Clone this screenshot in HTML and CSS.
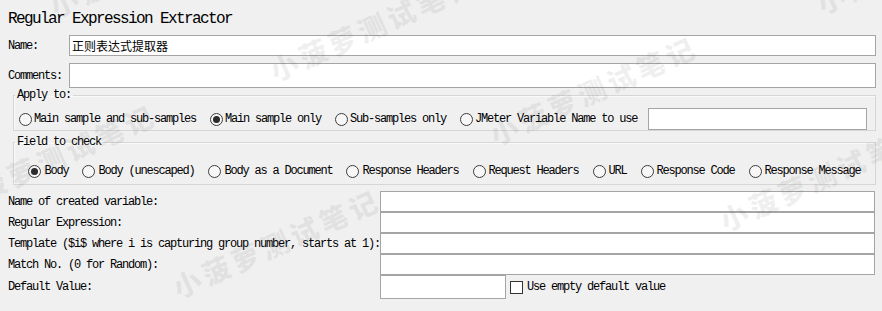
FILE: index.html
```html
<!DOCTYPE html>
<html lang="en">
<head>
  <meta charset="UTF-8">
  <title>Regular Expression Extractor</title>
  <link rel="stylesheet" href="styles.css">
</head>
<body>
  <div class="page">
    <h1 class="title">Regular Expression Extractor</h1>

    <div class="field-row name-row">
      <label class="field-label">Name:</label>
      <input class="text-input" type="text" value="正则表达式提取器">
    </div>
    <div class="field-row comments-row">
      <label class="field-label">Comments:</label>
      <input class="text-input" type="text">
    </div>

    <fieldset class="group apply-group">
      <legend>Apply to:</legend>
      <div class="radio-row">
        <span class="radio-item"><span class="radio"></span>Main sample and sub-samples</span>
        <span class="radio-item"><span class="radio checked"></span>Main sample only</span>
        <span class="radio-item"><span class="radio"></span>Sub-samples only</span>
        <span class="radio-item"><span class="radio"></span>JMeter Variable Name to use</span>
        <input class="text-input var-input" type="text">
      </div>
    </fieldset>

    <fieldset class="group field-group">
      <legend>Field to check</legend>
      <div class="radio-row centered">
        <span class="radio-item"><span class="radio checked"></span>Body</span>
        <span class="radio-item"><span class="radio"></span>Body (unescaped)</span>
        <span class="radio-item"><span class="radio"></span>Body as a Document</span>
        <span class="radio-item"><span class="radio"></span>Response Headers</span>
        <span class="radio-item"><span class="radio"></span>Request Headers</span>
        <span class="radio-item"><span class="radio"></span>URL</span>
        <span class="radio-item"><span class="radio"></span>Response Code</span>
        <span class="radio-item"><span class="radio"></span>Response Message</span>
      </div>
    </fieldset>

    <div class="regex-grid">
      <label class="grid-label">Name of created variable:</label>
      <input class="text-input" type="text">
      <label class="grid-label">Regular Expression:</label>
      <input class="text-input" type="text">
      <label class="grid-label">Template ($i$ where i is capturing group number, starts at 1):</label>
      <input class="text-input" type="text">
      <label class="grid-label">Match No. (0 for Random):</label>
      <input class="text-input" type="text">
      <label class="grid-label">Default Value:</label>
      <div class="default-row">
        <input class="text-input default-input" type="text">
        <span class="check-item"><span class="checkbox"></span>Use empty default value</span>
      </div>
    </div>
  </div>

  <!-- watermark overlay -->
  <div class="watermarks">
    <span class="wm wm-a">小菠萝测试笔记</span>
    <span class="wm wm-b">小菠萝测试笔记</span>
    <span class="wm wm-c">小菠萝测试笔记</span>
    <span class="wm wm-d">小菠萝测试笔记</span>
    <span class="wm wm-e">小菠萝测试笔记</span>
    <span class="wm wm-f">小菠萝测试笔记</span>
    <span class="wm wm-g">小菠萝测试笔记</span>
  </div>
</body>
</html>
```

FILE: styles.css
```css
html, body {
  margin: 0;
  height: 100%;
  overflow: hidden;
}
body {
  background-color: #f0f0f0;
  color: #000;
  font-family: "Liberation Mono", "Noto Sans CJK SC", monospace;
  font-size: 12px;
  letter-spacing: -1.2px;
  position: relative;
}
.page {
  padding: 0 6px 0 8px;
}
.title {
  margin: 9px 0 6px 0;
  font-size: 16px;
  font-weight: normal;
  letter-spacing: -1.6px;
  line-height: 20px;
}
.field-row {
  display: flex;
  align-items: center;
  margin-bottom: 7px;
}
.field-label {
  width: 61px;
  flex: none;
}
.text-input {
  box-sizing: border-box;
  border: 1px solid #a5a5a5;
  background-color: #fff;
  margin: 0;
  padding: 0 2px;
  font-family: "Noto Sans CJK SC", sans-serif;
  font-size: 12px;
  letter-spacing: 0;
  color: #000;
  outline: none;
}
.field-row .text-input {
  flex: 1;
}
.name-row .text-input {
  height: 21px;
}
.comments-row .text-input {
  height: 25px;
}
.group {
  margin: 0 0 0 5px;
  border: 1px solid #d6d6d6;
  box-shadow: inset 1px 1px 0 #fafafa;
  min-width: 0;
}
.group legend {
  padding: 0 2px;
  margin-left: -4px;
  line-height: 14px;
}
.apply-group {
  margin-top: -7px;
  padding: 6px 7px 0 5px;
}
.field-group {
  margin-top: 4px;
  padding: 11px 5px 2px 5px;
}
.radio-row {
  display: flex;
  align-items: center;
  height: 22px;
}
.radio-row.centered {
  justify-content: center;
}
.radio-item {
  display: flex;
  align-items: center;
  margin-right: 14px;
  white-space: nowrap;
}
.field-group .radio-item:last-child {
  margin-right: 0;
}
.radio {
  box-sizing: border-box;
  width: 13px;
  height: 13px;
  border: 1px solid #3c3c3c;
  border-radius: 50%;
  background-color: #f7f7f7;
  margin-right: 2px;
  position: relative;
}
.field-group .radio {
  margin-right: 3px;
}
.radio.checked::after {
  content: "";
  position: absolute;
  left: 2px;
  top: 2px;
  width: 7px;
  height: 7px;
  border-radius: 50%;
  background-color: #2b2b2b;
}
.var-input {
  width: 219px;
  height: 22px;
  margin-left: -3px;
}
.regex-grid {
  display: grid;
  grid-template-columns: 372px 1fr;
  margin-top: 6px;
  margin-right: 1px;
}
.grid-label {
  display: flex;
  align-items: center;
  white-space: nowrap;
}
.regex-grid > .text-input {
  height: 21px;
}
.default-row {
  display: flex;
  align-items: center;
}
.default-input {
  width: 126px;
  height: 24px;
}
.check-item {
  display: flex;
  align-items: center;
  margin-left: 4px;
}
.checkbox {
  box-sizing: border-box;
  width: 13px;
  height: 13px;
  border: 1px solid #333;
  background-color: #fff;
  margin-right: 4px;
}
.watermarks {
  position: absolute;
  inset: 0;
  overflow: hidden;
  pointer-events: none;
}
.wm {
  position: absolute;
  font-family: "Noto Sans CJK SC", sans-serif;
  font-weight: 900;
  font-size: 28px;
  line-height: 30px;
  letter-spacing: 4px;
  color: rgba(90, 90, 90, 0.09);
  white-space: nowrap;
  transform: rotate(-24deg);
  transform-origin: 0 100%;
}
.wm-a { left: 277px; top: 55px; }
.wm-b { left: 180px; top: 272px; }
.wm-c { left: 727px; top: 205px; }
.wm-d { left: -44px; top: 187px; }
.wm-e { left: 497px; top: 119px; }
.wm-f { left: 824px; top: -12px; }
.wm-g { left: 57px; top: -9px; }
```
